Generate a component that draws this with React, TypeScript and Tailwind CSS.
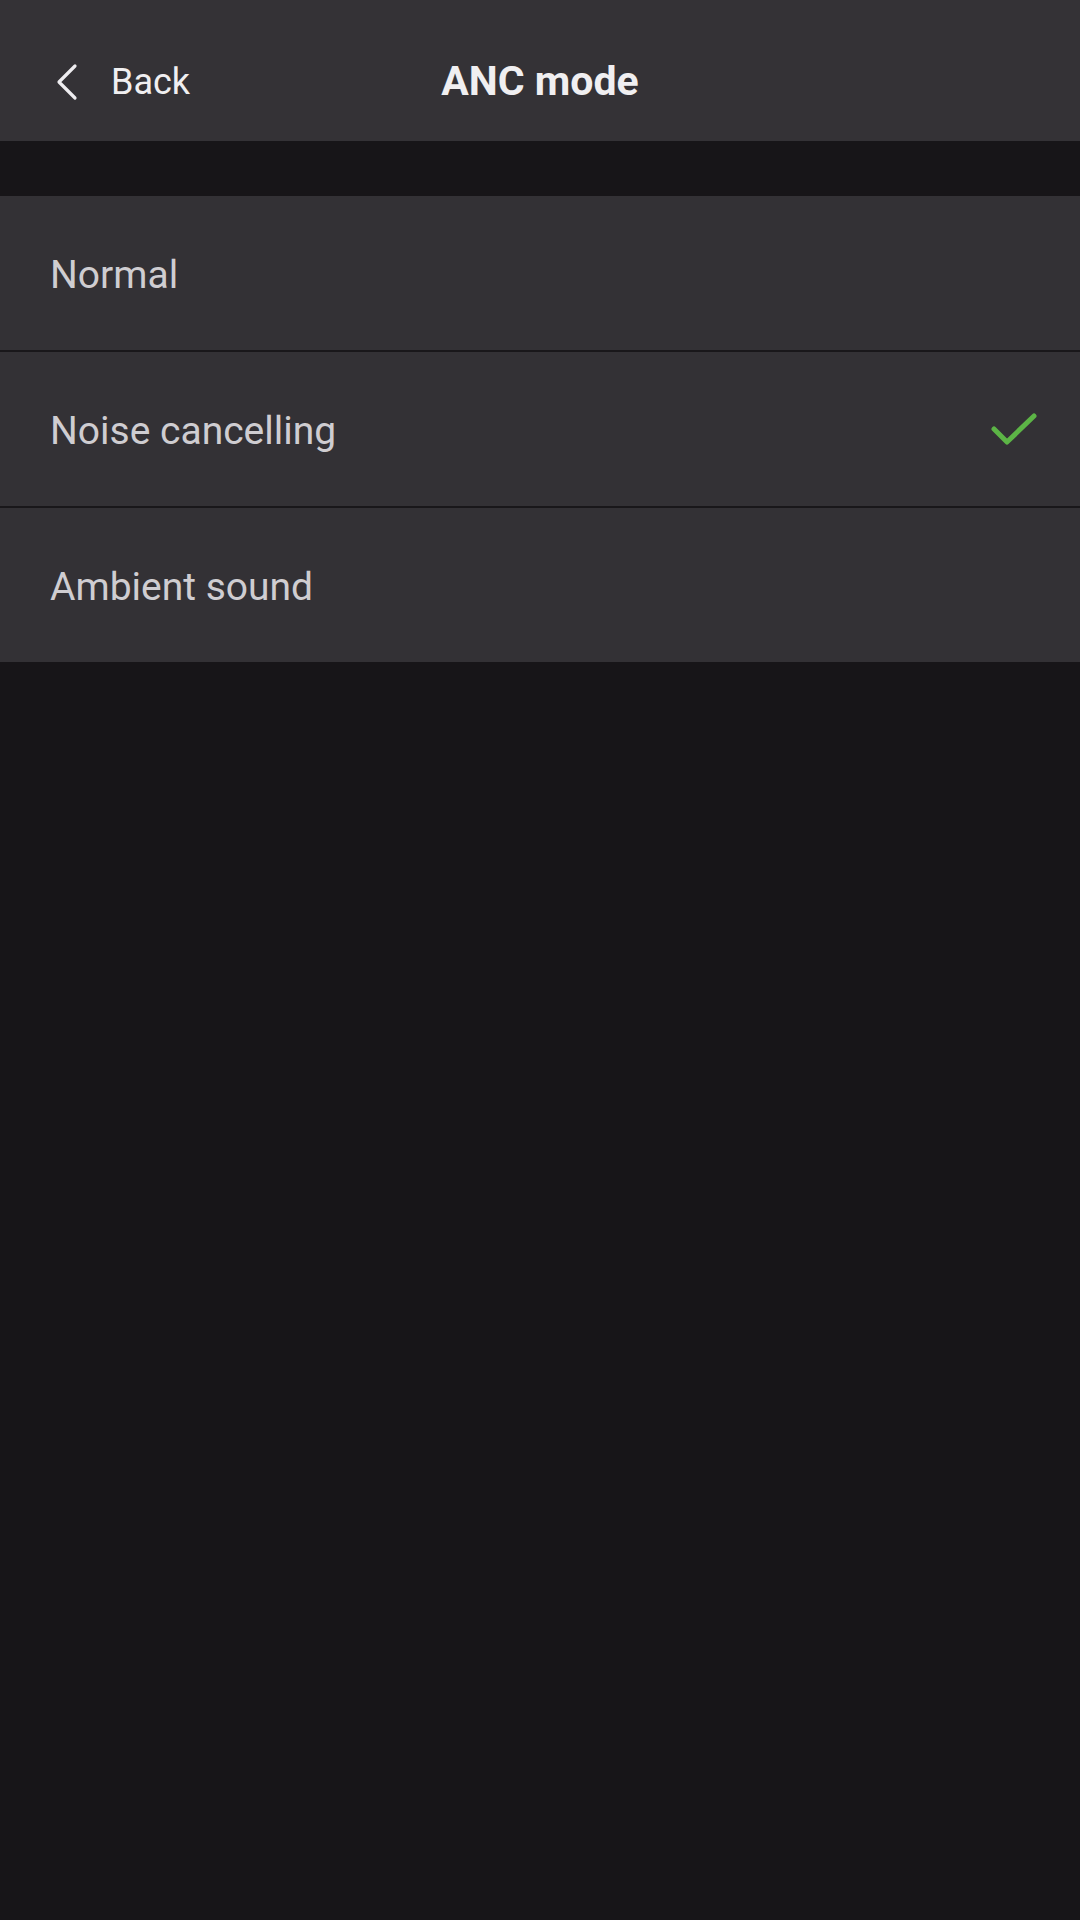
const OPTIONS = [
  { label: 'Normal', selected: false },
  { label: 'Noise cancelling', selected: true },
  { label: 'Ambient sound', selected: false },
];

export default function App() {
  return (
    <div className="min-h-screen w-full bg-[#171518]" style={{ fontFamily: 'Roboto, "Noto Sans", sans-serif' }}>
      <header className="relative flex h-[141px] items-center bg-[#343236] pt-[22px]">
        <button className="flex items-center pl-[55px] text-[36px] text-[#f0eff1]">
          <svg width="24" height="38" viewBox="0 0 24 38" fill="none" className="mr-[32px]">
            <path d="M20 3 L4 19 L20 35" stroke="#eeedf0" strokeWidth="3.2" strokeLinecap="round" strokeLinejoin="round" />
          </svg>
          Back
        </button>
        <h1 className="absolute left-0 right-0 top-[22px] bottom-0 flex items-center justify-center pointer-events-none text-[41px] font-bold text-[#f0eff1]">
          ANC mode
        </h1>
      </header>

      <div className="mt-[55px] flex flex-col gap-[2px] bg-[#19171a]">
        {OPTIONS.map(o => (
          <div key={o.label} className="flex h-[154px] items-center justify-between bg-[#333135] pl-[50px] pr-[42px] pt-[5px]">
            <span className="text-[39px] text-[#cfcdd1]">{o.label}</span>
            {o.selected && (
              <svg width="48" height="40" viewBox="0 0 48 40" fill="none">
                <path d="M4 17 L17 30 L44 4" stroke="#5cb446" strokeWidth="5" strokeLinecap="round" strokeLinejoin="round" />
              </svg>
            )}
          </div>
        ))}
      </div>
    </div>
  );
}
